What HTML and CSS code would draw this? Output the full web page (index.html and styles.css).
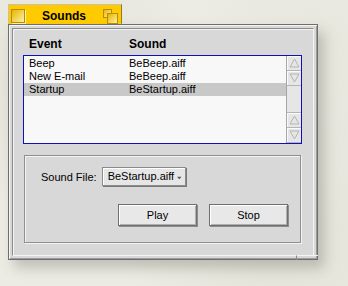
FILE: index.html
```html
<!DOCTYPE html>
<html lang="en">
<head>
    <meta charset="UTF-8">
    <meta name="viewport" content="width=device-width, initial-scale=1.0">
    <title>Sounds</title>
    <link rel="stylesheet" href="styles.css">
</head>
<body>
    <div class="window">
        <!-- Title tab -->
        <div class="tab">
            <div class="close-box"></div>
            <div class="title">Sounds</div>
            <div class="zoom-box">
                <span class="zoom-small"></span>
                <span class="zoom-big"></span>
            </div>
        </div>

        <div class="frame">
            <div class="content">
                <div class="columns">
                    <span class="col-event">Event</span>
                    <span class="col-sound">Sound</span>
                </div>

                <!-- Event list -->
                <div class="list">
                    <div class="rows">
                        <div class="row"><span class="col-event">Beep</span><span>BeBeep.aiff</span></div>
                        <div class="row"><span class="col-event">New E-mail</span><span>BeBeep.aiff</span></div>
                        <div class="row selected"><span class="col-event">Startup</span><span>BeStartup.aiff</span></div>
                    </div>
                    <div class="scrollbar">
                        <div class="arrow"><svg width="11" height="10" viewBox="0 0 11 10"><path d="M5.5 1 L10 9 L1 9 Z" fill="none" stroke="#b4b4b4"/></svg></div>
                        <div class="arrow"><svg width="11" height="10" viewBox="0 0 11 10"><path d="M1 1 L10 1 L5.5 9 Z" fill="none" stroke="#b4b4b4"/></svg></div>
                        <div class="track"></div>
                        <div class="arrow"><svg width="11" height="10" viewBox="0 0 11 10"><path d="M5.5 1 L10 9 L1 9 Z" fill="none" stroke="#b4b4b4"/></svg></div>
                        <div class="arrow"><svg width="11" height="10" viewBox="0 0 11 10"><path d="M1 1 L10 1 L5.5 9 Z" fill="none" stroke="#b4b4b4"/></svg></div>
                    </div>
                </div>

                <!-- Sound file controls -->
                <div class="group">
                    <div class="file-row">
                        <span class="label">Sound File:</span>
                        <div class="popup">
                            <span>BeStartup.aiff</span>
                            <svg width="7" height="4" viewBox="0 0 7 4"><path d="M0 0 L7 0 L3.5 4 Z" fill="#555"/></svg>
                        </div>
                    </div>
                    <div class="buttons">
                        <button>Play</button>
                        <button>Stop</button>
                    </div>
                </div>
            </div>
            <span class="resize"></span>
        </div>
    </div>
</body>
</html>
```

FILE: styles.css
```css
body {
    margin: 0;
    width: 348px;
    height: 286px;
    overflow: hidden;
    font-family: 'Liberation Sans', Arial, sans-serif;
    font-size: 11px;
    color: #000;
    background: #edece4;
    background-image:
        radial-gradient(circle at 20% 30%, rgba(200, 198, 185, 0.35), transparent 40%),
        radial-gradient(circle at 80% 80%, rgba(210, 208, 196, 0.4), transparent 45%),
        radial-gradient(circle at 90% 20%, rgba(225, 224, 214, 0.5), transparent 35%);
}

.window {
    margin: 4px 0 0 8px;
    width: 310px;
}

/* Yellow title tab */
.tab {
    box-sizing: border-box;
    width: 114px;
    height: 20px;
    display: flex;
    align-items: flex-start;
    padding: 4px 3px 0 2px;
    background: #ffcb00;
    border: 1px solid;
    border-color: #c9c2a4 #8f7a2a transparent #c9c2a4;
}

.close-box {
    box-sizing: border-box;
    width: 14px;
    height: 14px;
    border: 1px solid #b88e00;
    background: linear-gradient(135deg, #e8b400, #fff1a8);
    box-shadow: 1px 1px #fff3b0;
}

.title {
    flex: 1;
    text-align: center;
    font-weight: bold;
    font-size: 12px;
    line-height: 12px;
    padding-top: 1px;
}

.zoom-box {
    position: relative;
    width: 15px;
    height: 15px;
}

.zoom-small, .zoom-big {
    position: absolute;
    box-sizing: border-box;
    border: 1px solid #b88e00;
    background: linear-gradient(135deg, #e8b400, #fff1a8);
}

.zoom-small {
    left: 0;
    top: 0;
    width: 9px;
    height: 9px;
}

.zoom-big {
    left: 4px;
    top: 4px;
    width: 11px;
    height: 11px;
}

/* Window frame */
.frame {
    position: relative;
    box-sizing: border-box;
    width: 310px;
    height: 236px;
    padding: 3px;
    background: #d8d8d8;
    border: 1px solid #6e6e6e;
    box-shadow: inset 1px 1px #f4f4f4, inset -1px -1px #9c9c9c, 6px 8px 12px rgba(90, 88, 80, 0.3);
}

.content {
    box-sizing: border-box;
    height: 228px;
    border: 1px solid;
    border-color: #8a8a8a #f4f4f4 #f4f4f4 #8a8a8a;
    box-shadow: inset 1px 1px #f4f4f4;
}

.columns {
    display: flex;
    height: 26px;
    padding: 8px 0 0 16px;
    box-sizing: border-box;
    font-weight: bold;
    font-size: 12px;
    line-height: 14px;
}

.col-event {
    width: 100px;
}

/* List view */
.list {
    box-sizing: border-box;
    width: 279px;
    height: 89px;
    margin-left: 10px;
    display: flex;
    background: #f8f8f8;
    border: 1px solid #1010b8;
}

.rows {
    flex: 1;
    padding-top: 1px;
}

.row {
    display: flex;
    height: 13px;
    line-height: 13px;
    padding-left: 5px;
}

.row.selected {
    background: #c8c8c8;
}

.scrollbar {
    width: 14px;
    display: flex;
    flex-direction: column;
    background: #e6e6e6;
    border-left: 1px solid #a6a6a6;
}

.arrow {
    box-sizing: border-box;
    height: 15px;
    display: flex;
    align-items: center;
    justify-content: center;
    border-bottom: 1px solid #b4b4b4;
    box-shadow: inset 1px 1px #fafafa;
}

.track {
    flex: 1;
    border-bottom: 1px solid #b4b4b4;
}

/* Sound file group */
.group {
    box-sizing: border-box;
    width: 277px;
    height: 88px;
    margin: 11px 0 0 11px;
    padding: 11px 12px 0 16px;
    border: 1px solid #8f8f8f;
    box-shadow: 1px 1px #f4f4f4, inset 1px 1px #f4f4f4;
}

.file-row {
    display: flex;
    align-items: center;
    gap: 5px;
}

.popup {
    box-sizing: border-box;
    width: 84px;
    height: 19px;
    display: flex;
    align-items: center;
    gap: 3px;
    padding: 0 3px 1px 5px;
    background: #e6e6e6;
    border: 1px solid #8a8a8a;
    box-shadow: inset 1px 1px #fff, 1px 1px #7a7a7a;
    white-space: nowrap;
}

.popup svg {
    margin-top: 3px;
}

.buttons {
    display: flex;
    justify-content: flex-end;
    gap: 12px;
    margin-top: 18px;
}

button {
    box-sizing: border-box;
    width: 79px;
    height: 22px;
    padding: 0;
    font-family: 'Liberation Sans', Arial, sans-serif;
    font-size: 11px;
    color: #000;
    background: #e8e8e8;
    border: 1px solid #6f6f6f;
    box-shadow: inset 1px 1px #fff, inset -1px -1px #b0b0b0, 1px 1px #8c8c8c;
}

/* Resize knob in the corner */
.resize {
    position: absolute;
    right: -1px;
    bottom: -1px;
    width: 21px;
    height: 4px;
    border-left: 1px solid #8a8a8a;
    border-top: 1px solid #f4f4f4;
}
```
